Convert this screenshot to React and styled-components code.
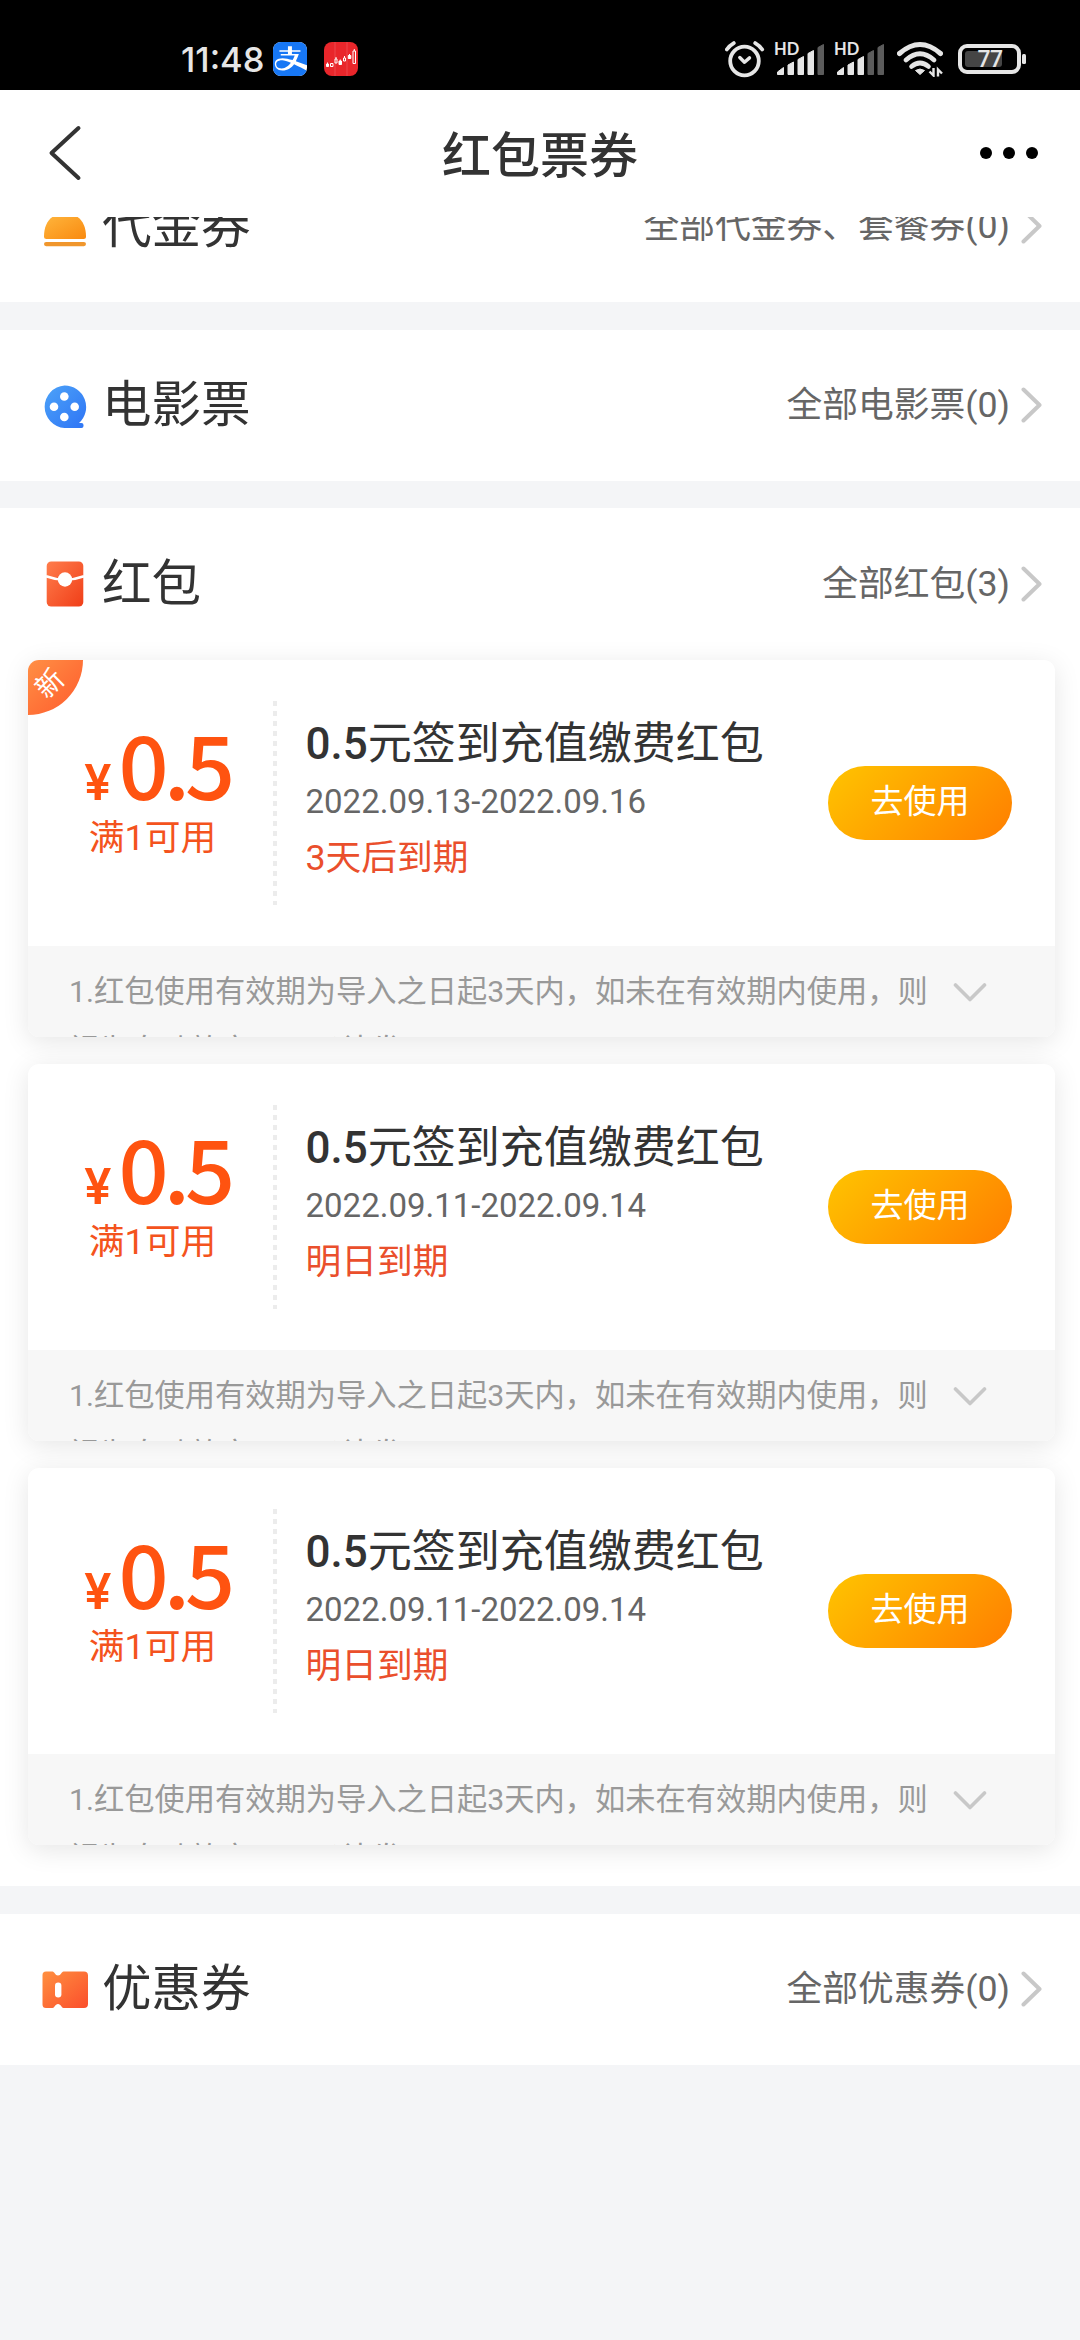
import React from 'react'
import styled, { createGlobalStyle } from 'styled-components'
import { FaAlipay } from 'react-icons/fa'

const coupons = [
    { id: 1, amount: '0.5', limit: '满1可用', title: '元签到充值缴费红包', date: '2022.09.13-2022.09.16', expire: '3天后到期', isNew: true },
    { id: 2, amount: '0.5', limit: '满1可用', title: '元签到充值缴费红包', date: '2022.09.11-2022.09.14', expire: '明日到期' },
    { id: 3, amount: '0.5', limit: '满1可用', title: '元签到充值缴费红包', date: '2022.09.11-2022.09.14', expire: '明日到期' },
]

const rule = '1.红包使用有效期为导入之日起3天内，如未在有效期内使用，则视为自动放弃，不予补发。'

const StockIcon = () => (
    <svg width="34" height="34" viewBox="0 0 34 34">
        <rect width="34" height="34" rx="8" fill="#e9262b" />
        <path d="M11 0v34M23 0v34" stroke="#f0575a" strokeWidth="0.7" />
        <g stroke="#fff" strokeWidth="1" fill="none">
            <path d="M2.5 22h2v2.500h-2zM3.500 20.500v1.500" fill="#fff" />
            <path d="M6.500 21.500h2.500v3h-2.500z" />
            <path d="M11 17h2v4h-2zM12 15v2" />
            <path d="M15 19h2.500v3.500h-2.500zM16.300 17.500v1.500" fill="#fff" />
            <path d="M19.500 16h2v3h-2zM20.500 14v2" />
            <path d="M24.300 13.500h2.500v3h-2.500zM25.500 12v1.500" fill="#fff" />
            <path d="M29 9h2.500v12.500h-2.500zM30.300 7v2" />
        </g>
    </svg>
)

const AlarmIcon = () => (
    <svg width="40" height="38" viewBox="0 0 40 38" fill="none" stroke="#e6e6e6" strokeLinecap="round" strokeLinejoin="round">
        <circle cx="19.500" cy="21" r="14.300" strokeWidth="3.800" />
        <path d="M14.800 17.500l4.700 4.700 5-4.300" strokeWidth="3.400" />
        <path d="M1.800 9.500q2.800-4 7-6.400M37.200 9.500q-2.800-4-7-6.400" strokeWidth="3.800" />
    </svg>
)

const SignalIcon = ({ level }) => {
    const bars = ['M0.500 34.500v-2.500l6-4.500v7z', 'M11 34.500v-9.500l5.500-3v12.500z', 'M21 34.500v-15l5.500-3v18z', 'M31 34.500v-21l5.500-3v24z', 'M41 34.500v-27l5.500-3v30z']
    return (
        <svg width="48" height="38" viewBox="0 0 48 38">
            {bars.map((d, i) => (
                <path key={d} d={d} fill={i < level ? '#e6e6e6' : '#5c5c5c'} stroke={i < level ? '#e6e6e6' : '#5c5c5c'} strokeLinejoin="round" />
            ))}
        </svg>
    )
}

const WifiIcon = () => (
    <svg width="46" height="36" viewBox="0 0 46 36" fill="none" stroke="#e6e6e6">
        <path d="M2.500 12.500q20.500-18 41 0" strokeWidth="5" strokeLinecap="round" />
        <path d="M9 19q14-12.500 28 0" strokeWidth="4.800" strokeLinecap="round" />
        <path d="M14.500 25.500q8.500-7 17 0" strokeWidth="4.600" strokeLinecap="round" />
        <path d="M23 33.500l-4.500-4q4.500-3 9 0z" fill="#e6e6e6" strokeLinejoin="round" />
        <path d="M36.500 27v8.500l-4-4.500M41 35.500V27l4 4.500" stroke="#000" strokeWidth="4.500" />
        <path d="M36.500 27v7.500l-4-4M41 35.500V28.500l4 4" strokeWidth="2.400" />
    </svg>
)

const BatteryIcon = () => (
    <svg width="70" height="32" viewBox="0 0 70 32">
        <rect x="2" y="3" width="59" height="26" rx="7" fill="none" stroke="#e6e6e6" strokeWidth="4" />
        <rect x="7" y="8" width="37" height="16" rx="3" fill="#454545" />
        <rect x="64" y="11" width="4" height="10" rx="1.500" fill="#e6e6e6" />
        <text x="32" y="24.300" textAnchor="middle" fontFamily="Roboto" fontSize="23" fontWeight="500" letterSpacing="-0.500" fill="#e6e6e6">77</text>
    </svg>
)

const BackIcon = () => (
    <svg width="34" height="56" viewBox="0 0 34 56">
        <path d="M30.500 3L3.500 28l27 25" fill="none" stroke="#333" strokeWidth="4" strokeLinecap="round" strokeLinejoin="round" />
    </svg>
)

const MoreIcon = () => (
    <svg width="60" height="14" viewBox="0 0 60 14">
        <circle cx="7" cy="7" r="6" />
        <circle cx="30" cy="7" r="6" />
        <circle cx="53" cy="7" r="6" />
    </svg>
)

const ArrowRight = () => (
    <svg width="22" height="36" viewBox="0 0 22 36">
        <path d="M2.500 2.500L18.500 18 2.500 33.500" fill="none" stroke="#c8c8c8" strokeWidth="4" strokeLinecap="round" strokeLinejoin="round" />
    </svg>
)

const ArrowDown = () => (
    <svg width="34" height="20" viewBox="0 0 34 20">
        <path d="M2.500 2l14.500 14.500L31.500 2" fill="none" stroke="#c8c8c8" strokeWidth="3.600" strokeLinecap="round" strokeLinejoin="round" />
    </svg>
)

const BurgerIcon = () => (
    <svg width="48" height="48" viewBox="0 0 48 48">
        <defs>
            <linearGradient id="burger" x1="0" y1="0" x2="1" y2="1">
                <stop offset="0" stopColor="#ffb53c" />
                <stop offset="1" stopColor="#f98a10" />
            </linearGradient>
        </defs>
        <path d="M3 33.500C3 24 6.500 16.500 13 13h22c6.500 3.500 10 11 10 20.500a2.500 2.500 0 0 1-2.500 2.500h-37A2.500 2.500 0 0 1 3 33.500z" fill="url(#burger)" />
        <rect x="3" y="39" width="42" height="4.200" rx="2.100" fill="#f0962c" />
    </svg>
)

const FilmIcon = () => (
    <svg width="48" height="48" viewBox="1 0 48 48">
        <defs>
            <linearGradient id="film" x1="0" y1="0" x2="1" y2="1">
                <stop offset="0" stopColor="#4da3f8" />
                <stop offset="1" stopColor="#2e74f5" />
            </linearGradient>
        </defs>
        <path d="M24.500 3.500a21.500 21.500 0 0 1 14.500 37.500h2.500a2 2 0 0 1 2 2v1a2 2 0 0 1-2 2H24.500a21.300 21.300 0 0 1 0-42.500z" fill="url(#film)" />
        <g fill="#fff">
            <circle cx="24.300" cy="14.500" r="4.300" />
            <circle cx="14" cy="24.700" r="4.300" />
            <circle cx="34.700" cy="24.700" r="4.300" />
            <circle cx="24.300" cy="35" r="4.300" />
        </g>
    </svg>
)

const PacketIcon = () => (
    <svg width="48" height="48" viewBox="0 0 48 48">
        <defs>
            <linearGradient id="packet" x1="0" y1="0" x2="1" y2="1">
                <stop offset="0" stopColor="#ff7d4c" />
                <stop offset="1" stopColor="#f03e18" />
            </linearGradient>
        </defs>
        <rect x="5.700" y="1.500" width="36.600" height="45" rx="4.500" fill="url(#packet)" />
        <path d="M5 16.200q19 7 38 0" fill="none" stroke="#fff" strokeWidth="2.600" />
        <circle cx="24" cy="19.500" r="7.200" fill="#fff" />
    </svg>
)

const TicketIcon = () => (
    <svg width="48" height="48" viewBox="0 0 48 48">
        <defs>
            <linearGradient id="ticket" x1="0" y1="0" x2="1" y2="1">
                <stop offset="0" stopColor="#ff9040" />
                <stop offset="1" stopColor="#fb4e2c" />
            </linearGradient>
        </defs>
        <path d="M5 5.500h6.500c2 0 2.500 4 5.500 4s3.500-4 5.500-4H43a4 4 0 0 1 4 4V38a4 4 0 0 1-4 4H22.500c-2 0-2.500-4-5.500-4s-3.500 4-5.500 4H5a3.500 3.500 0 0 1-3.500-3.500V9A3.500 3.500 0 0 1 5 5.500z" fill="url(#ticket)" />
        <rect x="14" y="16.500" width="6.400" height="15" rx="3.200" fill="#fff" />
    </svg>
)

const Entry = ({ icon, title, more }) => (
    <SectionHead>
        <SectionIcon>{icon}</SectionIcon>
        <SectionTitle>{title}</SectionTitle>
        <SectionMore>{more}</SectionMore>
        <ArrowRight />
    </SectionHead>
)

const Coupon = ({ data }) => (
    <Card>
        {data.isNew && <NewBadge><span>新</span></NewBadge>}
        <CardMain>
            <PriceBox>
                <Price><small>¥</small>{data.amount}</Price>
                <Limit>{data.limit}</Limit>
            </PriceBox>
            <Divider />
            <Info>
                <InfoTitle><b>{data.amount}</b>{data.title}</InfoTitle>
                <InfoDate>{data.date}</InfoDate>
                <InfoExpire>{data.expire}</InfoExpire>
            </Info>
            <UseButton>去使用</UseButton>
        </CardMain>
        <CardRule>
            <RuleText>{rule}</RuleText>
            <ArrowDown />
        </CardRule>
    </Card>
)

const App = () => {
    return (
        <>
            <GlobalStyle />
            <Page>
                <StatusBar>
                    <Clock>11:48</Clock>
                    <AlipayBox><FaAlipay size={40} color="#1777f5" /></AlipayBox>
                    <StockIcon />
                    <StatusRight>
                        <AlarmIcon />
                        <Signal><HdMark>HD</HdMark><SignalIcon level={4} /></Signal>
                        <Signal><HdMark>HD</HdMark><SignalIcon level={3} /></Signal>
                        <Wifi><WifiIcon /></Wifi>
                        <BatteryIcon />
                    </StatusRight>
                </StatusBar>
                <NavBar>
                    <BackIcon />
                    <NavTitle>红包票券</NavTitle>
                    <MoreIcon />
                </NavBar>
                <Content>
                    <List>
                        <Section>
                            <Entry icon={<BurgerIcon />} title="代金券" more="全部代金券、套餐券(0)" />
                        </Section>
                        <Section>
                            <Entry icon={<FilmIcon />} title="电影票" more="全部电影票(0)" />
                        </Section>
                        <Section>
                            <Entry icon={<PacketIcon />} title="红包" more="全部红包(3)" />
                            <CouponList>
                                {coupons.map((c) => <Coupon key={c.id} data={c} />)}
                            </CouponList>
                        </Section>
                        <Section>
                            <Entry icon={<TicketIcon />} title="优惠券" more="全部优惠券(0)" />
                        </Section>
                    </List>
                </Content>
            </Page>
        </>
    )
}

export default App

const GlobalStyle = createGlobalStyle`
    * {
        box-sizing: border-box;
    }
    body {
        margin: 0;
        background: #f4f5f7;
        font-family: Roboto, 'Noto Sans CJK SC', sans-serif;
    }
    svg {
        display: block;
        flex: none;
    }
`
const Page = styled.div`
    width: 1080px;
    height: 2340px;
    display: flex;
    flex-direction: column;
    overflow: hidden;
`
const StatusBar = styled.div`
    height: 90px;
    flex: none;
    display: flex;
    align-items: center;
    padding: 28px 52px 0 181px;
    background: #000;
`
const Clock = styled.div`
    width: 92px;
    padding-top: 1px;
    font-family: Inter, sans-serif;
    font-size: 34.5px;
    font-weight: 500;
    line-height: 40px;
    color: #e6e6e6;
    white-space: nowrap;
`
const AlipayBox = styled.div`
    width: 34px;
    height: 34px;
    margin-right: 17px;
    display: flex;
    align-items: center;
    justify-content: center;
    border-radius: 8px;
    overflow: hidden;
    background: #fff;
`
const StatusRight = styled.div`
    display: flex;
    align-items: center;
    gap: 12px;
    margin-left: auto;
`
const Signal = styled.div`
    position: relative;
`
const Wifi = styled.div`
    margin-right: 3px;
`
const HdMark = styled.span`
    position: absolute;
    left: -3px;
    top: 1px;
    font-family: Lato, sans-serif;
    font-size: 16.5px;
    font-weight: 700;
    line-height: 16px;
    color: #e6e6e6;
`
const NavBar = styled.div`
    height: 127px;
    flex: none;
    display: grid;
    grid-template-columns: 1fr auto 1fr;
    align-items: center;
    padding: 0 41px 2px 48px;
    background: #fff;

    svg:last-child {
        justify-self: end;
    }
`
const NavTitle = styled.div`
    padding: 8px 7px 0 0;
    font-size: 49px;
    font-weight: 500;
    line-height: 60px;
    color: #333;
`
const Content = styled.div`
    flex: 1;
    overflow: hidden;
`
const List = styled.div`
    margin-top: -66.25px;
    display: flex;
    flex-direction: column;
    gap: 27.5px;
`
const Section = styled.div`
    background: #fff;
`
const SectionHead = styled.div`
    height: 151.25px;
    display: flex;
    align-items: center;
    padding: 0 37px 0 40.5px;
`
const SectionIcon = styled.div`
    width: 61.5px;
    padding-top: 1px;
`
const SectionTitle = styled.div`
    flex: 1;
    font-size: 49.5px;
    line-height: 60px;
    color: #333;
`
const SectionMore = styled.div`
    margin-right: 11px;
    font-size: 35.75px;
    line-height: 48px;
    color: #666;
`
const CouponList = styled.div`
    display: flex;
    flex-direction: column;
    gap: 27.25px;
    padding: 0 25.5px 41.25px 27.5px;
`
const Card = styled.div`
    position: relative;
    height: 377px;
    border-radius: 11px;
    background: #fff;
    box-shadow: 0 5px 27px rgba(0, 0, 0, 0.1);
`
const NewBadge = styled.div`
    position: absolute;
    left: 0;
    top: 0;
    width: 55px;
    height: 55px;
    border-radius: 11px 0 55px 0;
    background: linear-gradient(135deg, #ff8f45, #ff5a2c);

    span {
        display: block;
        width: 44px;
        font-size: 27.5px;
        line-height: 48px;
        text-align: center;
        color: #fff;
        transform: rotate(-45deg);
    }
`
const CardMain = styled.div`
    height: 286px;
    display: flex;
    align-items: center;
    padding-right: 42.5px;
`
const PriceBox = styled.div`
    width: 245px;
    padding: 0 0 21px 5px;
    text-align: center;
    color: #ff5310;
`
const Price = styled.div`
    padding-left: 9px;
    font-family: 'Noto Sans CJK SC', sans-serif;
    font-size: 88px;
    font-weight: 500;
    line-height: 72px;
    letter-spacing: -5px;
    white-space: nowrap;

    small {
        margin-right: 12px;
        font-family: Inter, sans-serif;
        font-size: 49px;
        font-weight: 600;
    }
`
const Limit = styled.div`
    font-size: 35.75px;
    line-height: 39px;
    color: #f4531d;
`
const Divider = styled.div`
    width: 4px;
    height: 204px;
    background: repeating-linear-gradient(#ececec 0 5px, #fff 5px 10px);
`
const Info = styled.div`
    flex: 1;
    padding: 0 0 5px 29px;
`
const InfoTitle = styled.div`
    font-size: 44px;
    line-height: 60px;
    color: #333;

    b {
        font-weight: 500;
    }
`
const InfoDate = styled.div`
    font-size: 33px;
    line-height: 56px;
    color: #666;
`
const InfoExpire = styled.div`
    font-size: 35.75px;
    line-height: 57px;
    color: #ea4f2c;
`
const UseButton = styled.div`
    width: 184px;
    height: 74px;
    border-radius: 37px;
    background: linear-gradient(135deg, #ffc400, #ff7e00);
    font-size: 33px;
    line-height: 71px;
    text-align: center;
    color: #fff;
`
const CardRule = styled.div`
    height: 91px;
    display: flex;
    justify-content: space-between;
    padding: 0 68px 0 41.5px;
    border-radius: 0 0 11px 11px;
    background: #f7f7f7;
    overflow: hidden;

    svg {
        margin-top: 37px;
    }
`
const RuleText = styled.div`
    width: 865px;
    padding-top: 16px;
    font-size: 30.25px;
    line-height: 59px;
    color: #999;
`
